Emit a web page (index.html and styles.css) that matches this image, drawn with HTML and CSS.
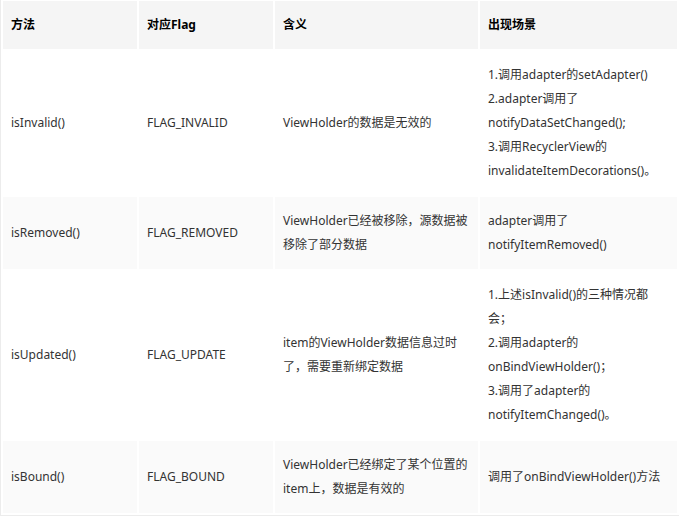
FILE: index.html
```html
<!DOCTYPE html>
<html lang="zh-CN">
<head>
  <meta charset="UTF-8">
  <meta name="viewport" content="width=device-width, initial-scale=1.0">
  <title>ViewHolder Flag</title>
  <link rel="stylesheet" href="styles.css">
</head>
<body>

  <div class="table-wrap">
    <table class="flag-table">
      <colgroup>
        <col class="col-method">
        <col class="col-flag">
        <col class="col-meaning">
        <col class="col-scene">
      </colgroup>
      <thead>
        <tr>
          <th>方法</th>
          <th>对应Flag</th>
          <th>含义</th>
          <th>出现场景</th>
        </tr>
      </thead>
      <tbody>
        <tr>
          <td>isInvalid()</td>
          <td>FLAG_INVALID</td>
          <td>ViewHolder的数据是无效的</td>
          <td>1.调用adapter的setAdapter()<br>2.adapter调用了notifyDataSetChanged();<br>3.调用RecyclerView的invalidateItemDecorations()。</td>
        </tr>
        <tr>
          <td>isRemoved()</td>
          <td>FLAG_REMOVED</td>
          <td>ViewHolder已经被移除，源数据被移除了部分数据</td>
          <td>adapter调用了notifyItemRemoved()</td>
        </tr>
        <tr>
          <td>isUpdated()</td>
          <td>FLAG_UPDATE</td>
          <td>item的ViewHolder数据信息过时了，需要重新绑定数据</td>
          <td>1.上述isInvalid()的三种情况都会；<br>2.调用adapter的onBindViewHolder()；<br>3.调用了adapter的notifyItemChanged()。</td>
        </tr>
        <tr>
          <td>isBound()</td>
          <td>FLAG_BOUND</td>
          <td>ViewHolder已经绑定了某个位置的item上，数据是有效的</td>
          <td>调用了onBindViewHolder()方法</td>
        </tr>
      </tbody>
    </table>
  </div>

</body>
</html>
```

FILE: styles.css
```css
html, body {
  margin: 0;
  padding: 0;
  background: #fff;
  overflow: hidden;
}
body {
  font-family: 'Noto Sans', 'Noto Sans CJK SC', sans-serif;
  font-size: 12px;
  line-height: 24px;
  color: #333;
}
.table-wrap {
  margin-top: -2px;
}
.flag-table {
  width: 680px;
  table-layout: fixed;
  border-collapse: separate;
  border-spacing: 2px;
  border: 1px solid #ececec;
}
.col-method { width: 134px; }
.col-flag { width: 134px; }
.col-meaning { width: 203px; }
.col-scene { width: 197px; }
.flag-table th,
.flag-table td {
  padding: 12px 8px;
  text-align: left;
  vertical-align: middle;
  word-wrap: break-word;
}
.flag-table th {
  background: #f5f5f5;
  color: #000;
  font-weight: bold;
}
.flag-table tbody tr:nth-child(even) td {
  background: #fafafa;
}
```
